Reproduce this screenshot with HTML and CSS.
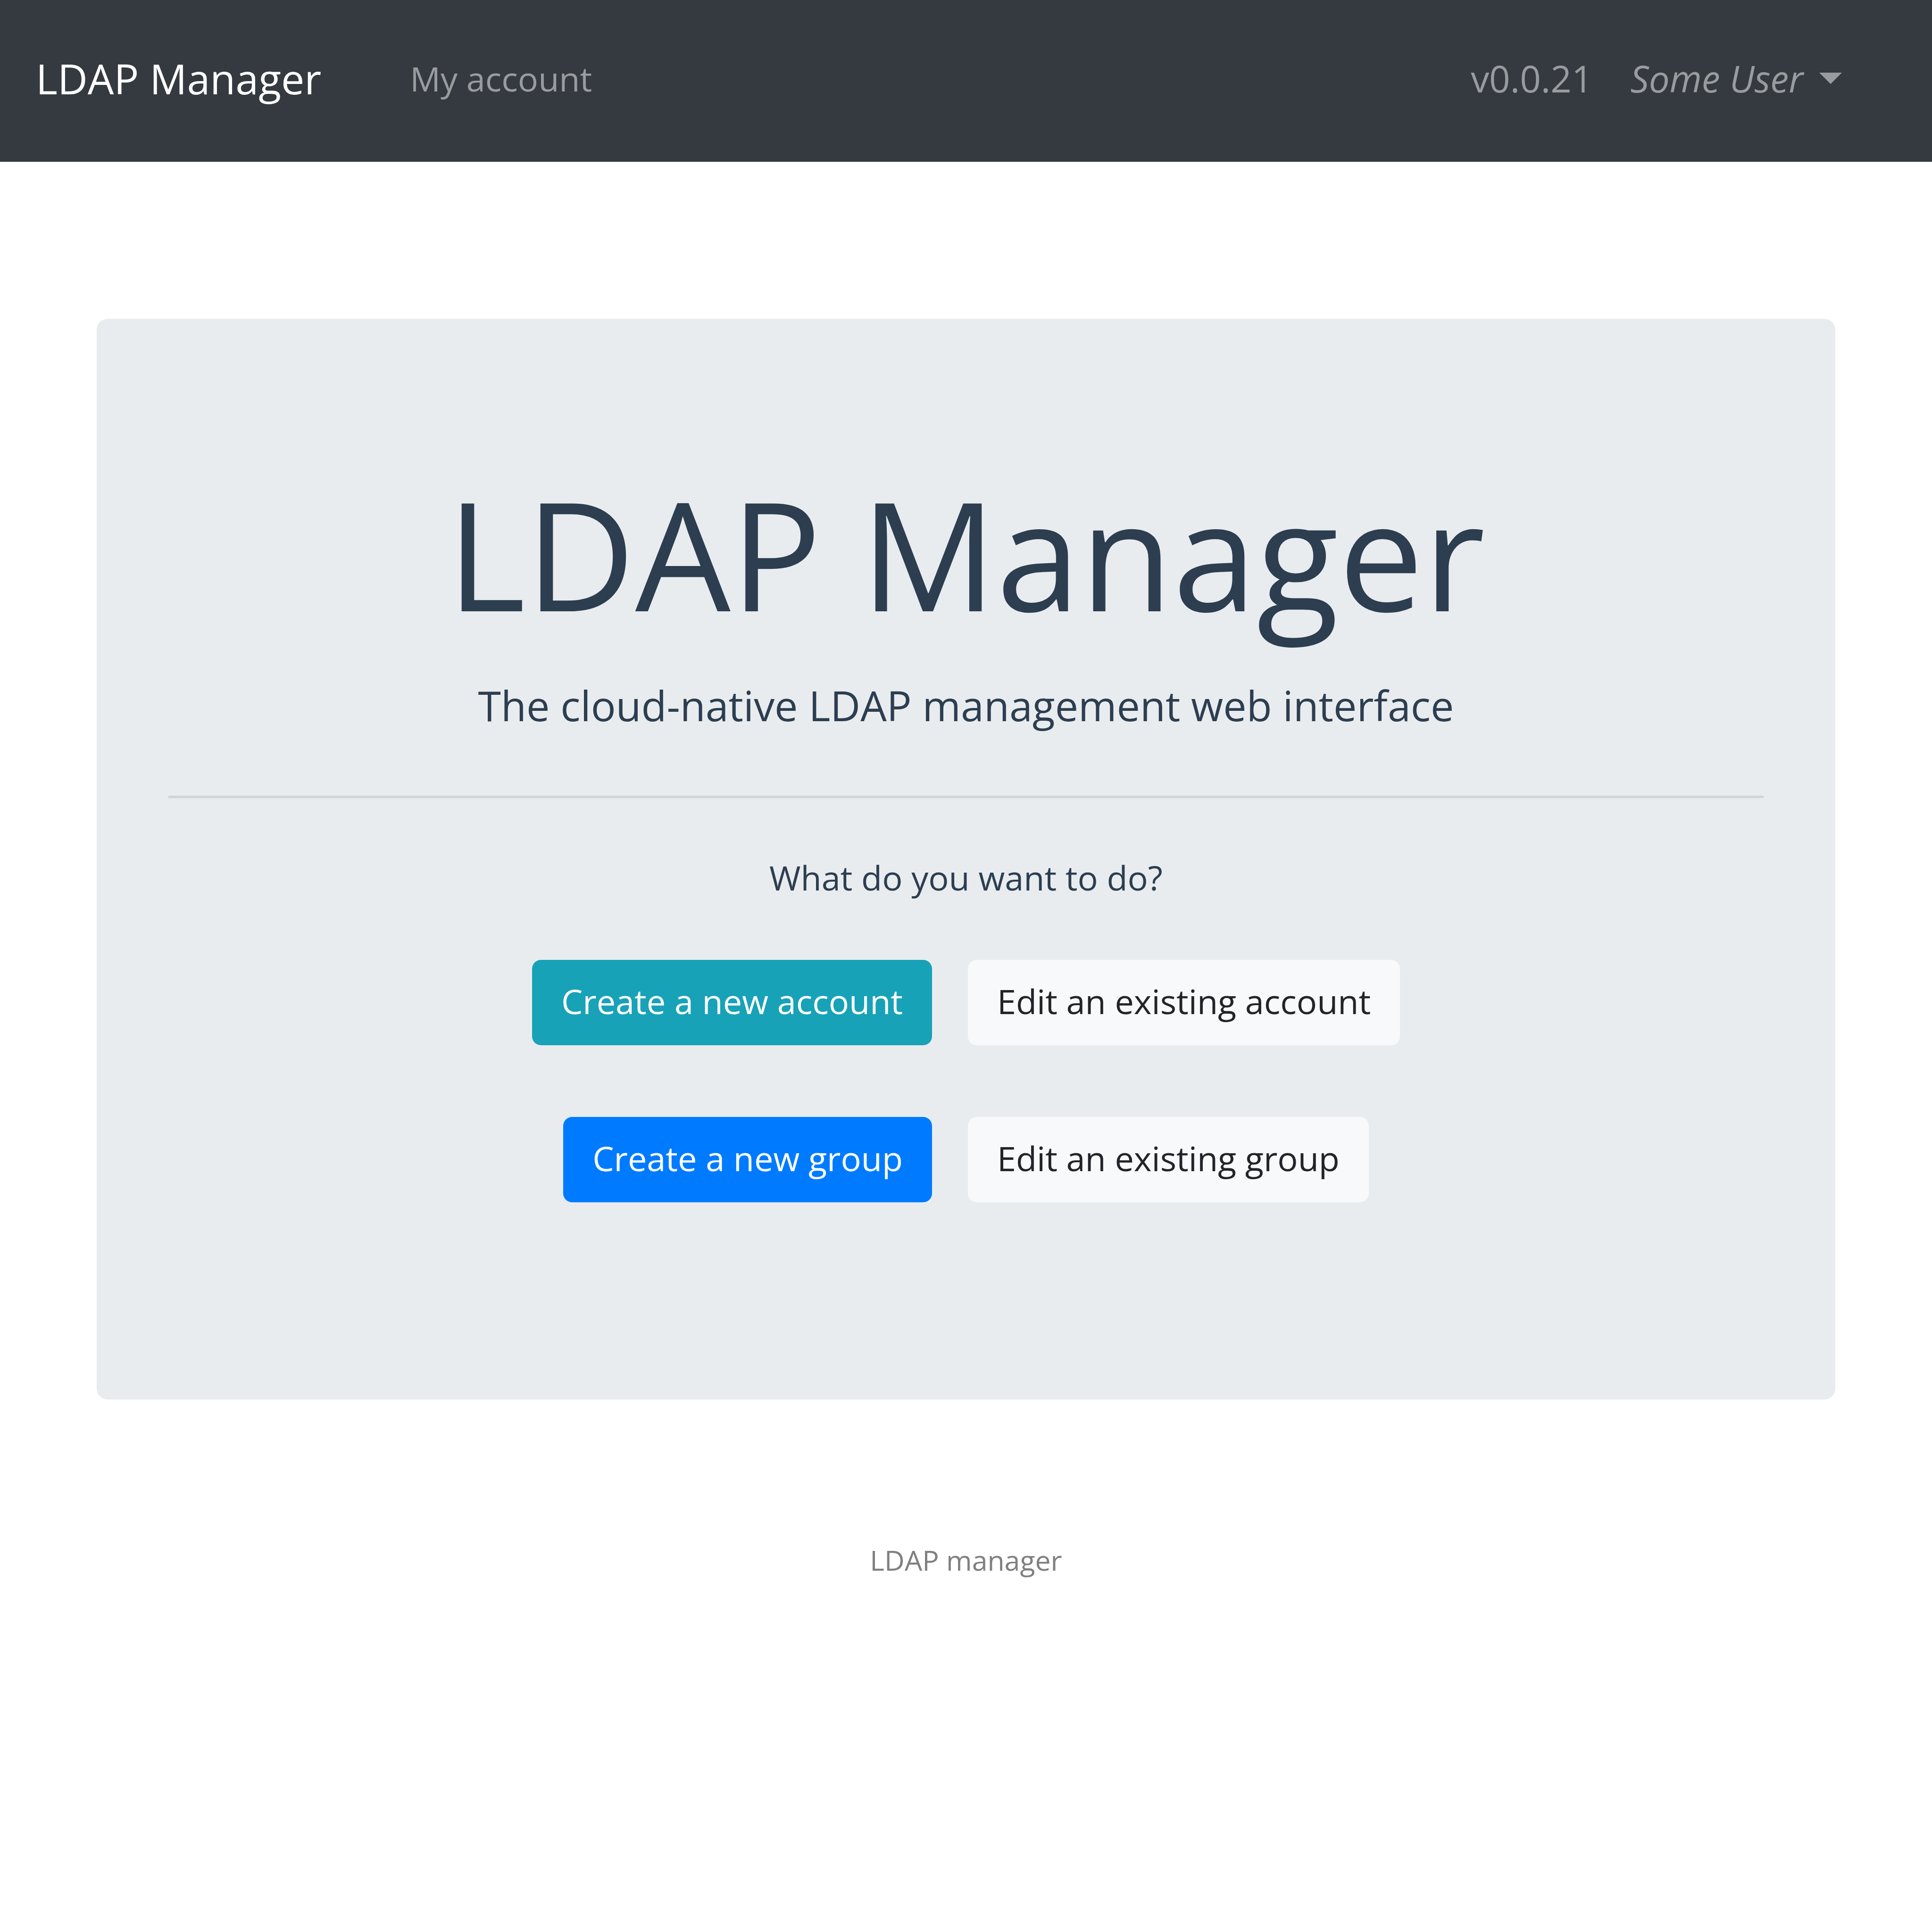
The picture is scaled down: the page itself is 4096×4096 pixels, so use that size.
FILE: index.html
```html
<!DOCTYPE html>
<html lang="en">
<head>
  <meta charset="utf-8">
  <meta name="viewport" content="width=device-width, initial-scale=1">
  <title>LDAP Manager</title>
  <link rel="stylesheet" href="styles.css">
</head>
<body>
  <nav class="navbar">
    <a class="brand" href="#">LDAP Manager</a>
    <a class="nav-link" href="#">My account</a>
    <div class="nav-right">
      <span class="version">v0.0.21</span>
      <button class="user-menu" type="button" aria-haspopup="true"><em>Some User</em><span class="caret"></span></button>
    </div>
  </nav>
  <main class="jumbotron">
    <h1 class="title">LDAP Manager</h1>
    <p class="lead">The cloud-native LDAP management web interface</p>
    <hr class="divider">
    <p class="question">What do you want to do?</p>
    <div class="actions">
      <div class="action-row">
        <button class="btn btn-info" type="button">Create a new account</button>
        <button class="btn btn-light" type="button">Edit an existing account</button>
      </div>
      <div class="action-row">
        <button class="btn btn-primary" type="button">Create a new group</button>
        <button class="btn btn-light" type="button">Edit an existing group</button>
      </div>
    </div>
  </main>
  <footer class="footer">LDAP manager</footer>
</body>
</html>
```
FILE: styles.css
```css
* {
  box-sizing: border-box;
}

body {
  margin: 0;
  background: #fff;
  color: #2c3e50;
  font-family: "Open Sans", "Liberation Sans", sans-serif;
  font-size: 72px;
  line-height: 114px;
}

button {
  border: 0;
  font: inherit;
  cursor: pointer;
}

.navbar {
  display: flex;
  align-items: center;
  min-height: 343px;
  padding: 0 191px 12px 72px;
  background: #343a40;
}

.brand {
  margin: 0 188px 0 0;
  padding-left: 4px;
  color: #fff;
  font-size: 88px;
  text-decoration: none;
}

.nav-link,
.version,
.user-menu {
  color: #999c9f;
  text-decoration: none;
}

.nav-right {
  display: flex;
  align-items: center;
  gap: 80px;
  margin-left: auto;
  font-size: 78px;
}

.user-menu {
  display: flex;
  align-items: center;
  gap: 34px;
  padding: 0;
  background: none;
}

.caret {
  border-top: 24px solid;
  border-right: 24px solid transparent;
  border-left: 24px solid transparent;
}

.jumbotron {
  margin: 333px 5% 0;
  padding: 296px 152px 418px;
  border-radius: 23px;
  background: #e9ecef;
  text-align: center;
}

.title {
  margin: 0 0 52px;
  font-size: 320px;
  font-weight: 400;
  line-height: 400px;
}

.lead {
  margin: 0;
  font-size: 88px;
  line-height: 142px;
}

.divider {
  margin: 121px 0 111px;
  border: 0;
  border-top: 5px solid rgba(0, 0, 0, 0.1);
}

.question {
  margin: 0 0 118px;
}

.actions {
  display: flex;
  flex-direction: column;
  gap: 152px;
}

.action-row {
  display: flex;
  justify-content: center;
  gap: 76px;
}

.btn {
  padding: 30px 62px 37px;
  border-radius: 19px;
  color: #fff;
}

.btn-info {
  background: #17a2b8;
}

.btn-primary {
  background: #007bff;
}

.btn-light {
  background: #f8f9fa;
  color: #212529;
}

.footer {
  margin-top: 295px;
  color: #808080;
  font-size: 59px;
  line-height: 90px;
  text-align: center;
}
```
